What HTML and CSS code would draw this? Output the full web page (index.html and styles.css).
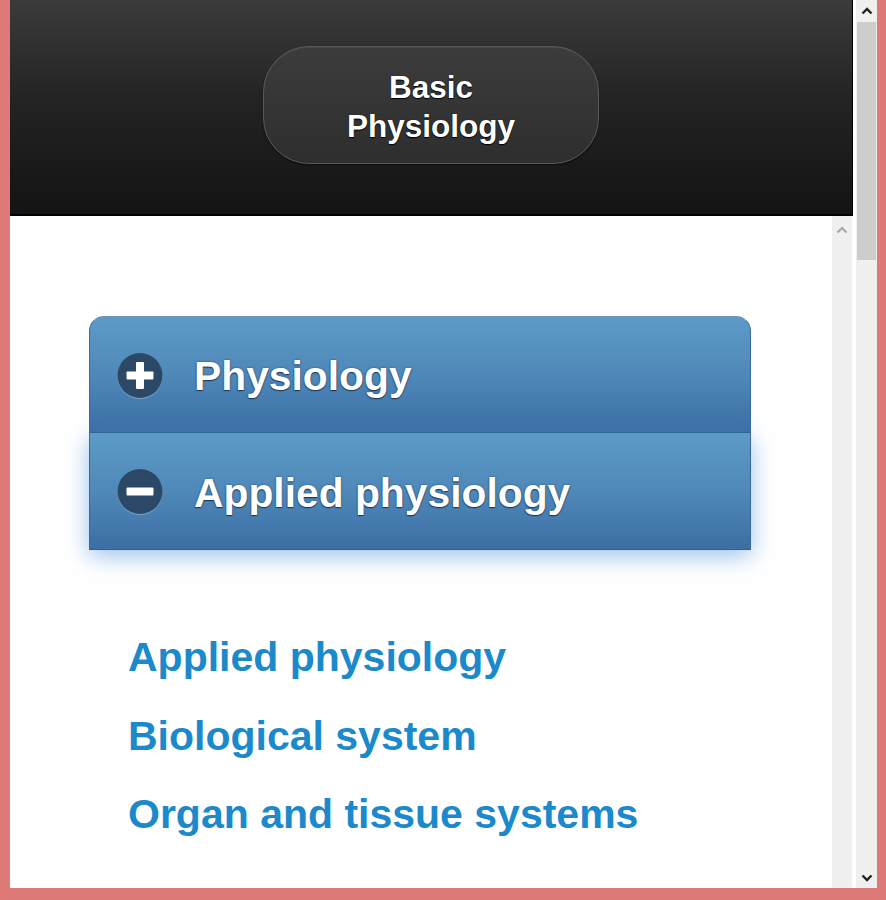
FILE: index.html
```html
<!DOCTYPE html>
<html lang="en">
<head>
<meta charset="utf-8">
<title>Basic Physiology</title>
<link rel="stylesheet" href="styles.css">
</head>
<body>
<div class="frame">
  <div class="page">
    <header class="topbar">
      <div class="title-btn">Basic<br>Physiology</div>
    </header>
    <div class="body-area">
      <main class="content">
        <div class="accordion">
          <div class="acc-row">
            <svg class="acc-icon" width="46" height="46" viewBox="0 0 46 46">
              <circle cx="23" cy="23.5" r="22.5" fill="#8fb3d3" opacity="0.7"/>
              <circle cx="23" cy="22.5" r="22.5" fill="#2b4966"/>
              <rect x="19" y="9" width="8" height="27" rx="1" fill="#fff"/>
              <rect x="9.5" y="18.5" width="27" height="8" rx="1" fill="#fff"/>
            </svg>
            <span class="acc-label">Physiology</span>
          </div>
          <div class="acc-row open">
            <svg class="acc-icon" width="46" height="46" viewBox="0 0 46 46">
              <circle cx="23" cy="23.5" r="22.5" fill="#8fb3d3" opacity="0.7"/>
              <circle cx="23" cy="22.5" r="22.5" fill="#2b4966"/>
              <rect x="9.5" y="18.5" width="27" height="8" rx="1" fill="#fff"/>
            </svg>
            <span class="acc-label">Applied physiology</span>
          </div>
        </div>
        <ul class="links">
          <li><a href="#">Applied physiology</a></li>
          <li><a href="#">Biological system</a></li>
          <li><a href="#">Organ and tissue systems</a></li>
        </ul>
      </main>
      <div class="inner-scroll">
        <svg class="chev" width="12" height="8" viewBox="0 0 12 8"><path d="M1.5 6.5 L6 2 L10.5 6.5" fill="none" stroke="#a6a6a6" stroke-width="2"/></svg>
      </div>
    </div>
  </div>
  <div class="outer-scroll">
    <div class="os-btn">
      <svg width="12" height="8" viewBox="0 0 12 8"><path d="M1.5 6.5 L6 2 L10.5 6.5" fill="none" stroke="#222" stroke-width="2.4"/></svg>
    </div>
    <div class="os-thumb"></div>
    <div class="os-track"></div>
    <div class="os-btn">
      <svg width="12" height="8" viewBox="0 0 12 8"><path d="M1.5 1.5 L6 6 L10.5 1.5" fill="none" stroke="#222" stroke-width="2.4"/></svg>
    </div>
  </div>
</div>
</body>
</html>
```

FILE: styles.css
```css
html, body {
  margin: 0;
  padding: 0;
}

body {
  font-family: "Liberation Sans", Arial, sans-serif;
  background: #de7b78;
}

.frame {
  width: 886px;
  height: 900px;
  box-sizing: border-box;
  padding: 0 9px 12px 10px;
  display: flex;
  background: #de7b78;
}

.page {
  flex: 1;
  display: flex;
  flex-direction: column;
  background: #fff;
  min-width: 0;
}

.topbar {
  height: 214px;
  margin-right: 2px;
  background: linear-gradient(#3b3b3b 0%, #242424 45%, #131313 100%);
  border-right: 1px solid #000;
  border-bottom: 2px solid #000;
  display: flex;
  justify-content: center;
  align-items: flex-start;
}

.title-btn {
  margin-top: 46px;
  width: 336px;
  height: 118px;
  box-sizing: border-box;
  border-radius: 46px;
  border: 1px solid #5a5a5a;
  background: linear-gradient(#3c3c3c, #2e2e2e);
  box-shadow: inset 0 1px 0 rgba(255,255,255,0.06), 0 1px 2px rgba(0,0,0,0.6);
  color: #fff;
  font-weight: bold;
  font-size: 31.5px;
  line-height: 39px;
  text-align: center;
  display: flex;
  align-items: center;
  justify-content: center;
  padding-top: 4px;
  text-shadow: 0 1px 1px #000, 0 0 1px #000;
}

.body-area {
  flex: 1;
  display: flex;
}

.content {
  flex: 1;
  padding-top: 100px;
}

.accordion {
  margin-left: 79px;
  width: 662px;
}

.acc-row {
  height: 117px;
  display: flex;
  align-items: center;
  padding-left: 27px;
  padding-top: 4px;
  box-sizing: border-box;
  background: linear-gradient(#5c9bc7 0%, #4f88b9 50%, #3c6fa4 100%);
  border-left: 1px solid #3a6a9a;
  border-right: 1px solid #3a6a9a;
}

.acc-row .acc-icon {
  margin-top: -2px;
}

.acc-row:first-child {
  border-radius: 15px 15px 0 0;
  border-top: 1px solid #6e8fae;
  border-bottom: 1px solid #2f5f8f;
}

.acc-row.open {
  box-shadow: 0 6px 22px rgba(70, 140, 215, 0.55);
  border-bottom: 1px solid #2f5f8f;
  position: relative;
}

.acc-icon {
  flex: none;
  display: block;
}

.acc-label {
  margin-left: 31px;
  color: #fff;
  font-weight: bold;
  font-size: 40.8px;
  text-shadow: 0 1px 1px #1b3553, 0 0 2px #24466b;
}

.links {
  list-style: none;
  margin: 68px 0 0 118px;
  padding: 0;
}

.links li {
  font-size: 41px;
  line-height: 78.5px;
}

.links a {
  color: #1c89cb;
  font-weight: bold;
  font-size: 41px;
  text-decoration: none;
}

.inner-scroll {
  width: 20px;
  margin-right: 3px;
  background: #f0f0f0;
  display: flex;
  justify-content: center;
  align-items: flex-start;
  padding-top: 10px;
  box-sizing: border-box;
}

.inner-scroll .chev {
  display: block;
}

.outer-scroll {
  width: 22px;
  display: flex;
  flex-direction: column;
  background: #f0f0f0;
  border-left: 1px solid #fff;
  box-sizing: border-box;
}

.os-btn {
  height: 21px;
  display: flex;
  align-items: center;
  justify-content: center;
}

.os-thumb {
  height: 238px;
  margin: 1px 1px 0 1px;
  background: #cdcdcd;
}

.os-track {
  flex: 1;
}
```
